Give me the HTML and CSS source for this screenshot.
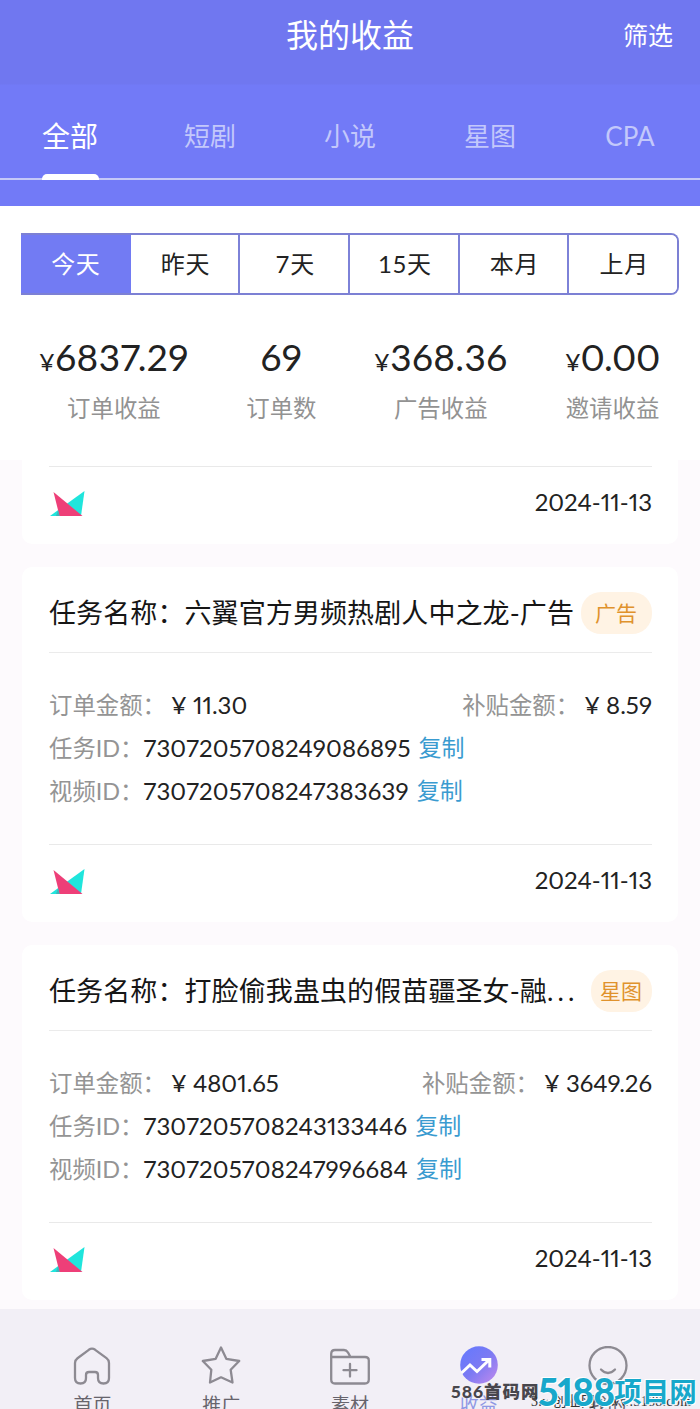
FILE: index.html
```
<!DOCTYPE html>
<html lang="zh-CN">
<head>
    <meta charset="UTF-8">
    <meta name="viewport" content="width=device-width, initial-scale=1.0">
    <title>我的收益</title>
    <link rel="stylesheet" href="styles.css">
</head>
<body>
    <svg class="defs" width="0" height="0">
        <symbol id="logo" viewBox="0 0 36 28">
            <path d="M35.5 0 L32 25 H1 Z" fill="#1fe5dc"/>
            <path d="M4.5 1 L33.5 25 H10.5 Z" fill="#ee3f78"/>
            <path d="M9 19.5 L10.5 25 H7 Z" fill="#3fb4ba"/>
        </symbol>
    </svg>

    <header class="header">
        <div class="title-bar">
            <span></span>
            <h1>我的收益</h1>
            <span class="filter">筛选</span>
        </div>
        <nav class="tabs">
            <span class="tab active">全部</span>
            <span class="tab">短剧</span>
            <span class="tab">小说</span>
            <span class="tab">星图</span>
            <span class="tab">CPA</span>
        </nav>
    </header>

    <section class="summary">
        <div class="dates">
            <button class="active">今天</button>
            <button>昨天</button>
            <button>7天</button>
            <button>15天</button>
            <button>本月</button>
            <button>上月</button>
        </div>
        <div class="stats">
            <div class="stat"><p class="num"><small>¥</small>6837.29</p><p class="label">订单收益</p></div>
            <div class="stat"><p class="num">69</p><p class="label">订单数</p></div>
            <div class="stat"><p class="num"><small>¥</small>368.36</p><p class="label">广告收益</p></div>
            <div class="stat"><p class="num zero"><small>¥</small>0.00</p><p class="label">邀请收益</p></div>
        </div>
    </section>

    <main class="list">
        <article class="card first">
            <div class="card-foot">
                <svg class="logo"><use href="#logo"/></svg>
                <time>2024-11-13</time>
            </div>
        </article>

        <article class="card">
            <div class="card-head">
                <h2>任务名称：六翼官方男频热剧人中之龙-广告</h2>
                <span class="badge wide">广告</span>
            </div>
            <div class="info">
                <div class="row">
                    <p><span class="key">订单金额：</span><span class="money">¥ 11.30</span></p>
                    <p><span class="key">补贴金额：</span><span class="money">¥ 8.59</span></p>
                </div>
                <div class="row"><p><span class="key">任务ID：</span><span class="id">7307205708249086895</span><a>复制</a></p></div>
                <div class="row"><p><span class="key">视频ID：</span><span class="id">7307205708247383639</span><a>复制</a></p></div>
            </div>
            <div class="card-foot">
                <svg class="logo"><use href="#logo"/></svg>
                <time>2024-11-13</time>
            </div>
        </article>

        <article class="card">
            <div class="card-head">
                <h2>任务名称：打脸偷我蛊虫的假苗疆圣女-融<span class="dots">...</span></h2>
                <span class="badge">星图</span>
            </div>
            <div class="info">
                <div class="row">
                    <p><span class="key">订单金额：</span><span class="money">¥ 4801.65</span></p>
                    <p><span class="key">补贴金额：</span><span class="money">¥ 3649.26</span></p>
                </div>
                <div class="row"><p><span class="key">任务ID：</span><span class="id">7307205708243133446</span><a>复制</a></p></div>
                <div class="row"><p><span class="key">视频ID：</span><span class="id">7307205708247996684</span><a>复制</a></p></div>
            </div>
            <div class="card-foot">
                <svg class="logo"><use href="#logo"/></svg>
                <time>2024-11-13</time>
            </div>
        </article>
    </main>

    <footer class="tabbar">
        <div class="item">
            <svg viewBox="0 0 40 40"><path d="M16.8 3.8 Q20 1.6 23.2 3.8 L34.5 12.2 Q37 14 37 17 V32 Q37 37.5 31.5 37.5 Q26 37.5 26 32 V29 Q26 26 23 26 H17 Q14 26 14 29 V32 Q14 37.5 8.5 37.5 Q3 37.5 3 32 V17 Q3 14 5.5 12.2 Z"/></svg>
            <span>首页</span>
        </div>
        <div class="item">
            <svg viewBox="0 0 40 40"><path d="M20 1.5 L25.3 12.8 L38.2 15 L29.7 23.8 L31.5 36.5 L20 31.3 L9 36.5 L10.3 23.8 L1.8 15 L14.7 12.8 Z"/></svg>
            <span>推广</span>
        </div>
        <div class="item">
            <svg viewBox="0 0 40 40"><path d="M1.2 11 V8 Q1.2 4 5 4 H14 Q16.5 4 18 6.5 L20.5 11 M1.2 11 H35 Q38.8 11 38.8 14.5 V33.5 Q38.8 37.5 34.8 37.5 H5 Q1.2 37.5 1.2 33.5 Z M20 18 V30.5 M13.5 24.2 H26.5"/></svg>
            <span>素材</span>
        </div>
        <div class="item on">
            <svg viewBox="0 0 40 40">
                <defs>
                    <linearGradient id="disc" x1="0" y1="0" x2="1" y2="1">
                        <stop offset="0" stop-color="#6379ff"/>
                        <stop offset="0.5" stop-color="#7b7af3"/>
                        <stop offset="1" stop-color="#c38aed"/>
                    </linearGradient>
                </defs>
                <circle class="disc" cx="20" cy="19" r="18.8" fill="url(#disc)"/>
                <path class="trend" d="M2.5 27 L11 19 L18 25.5 L30 14 M22.5 13.5 H30.8 V21.5"/>
            </svg>
            <span>收益</span>
        </div>
        <div class="item">
            <svg viewBox="0 0 40 40"><circle cx="20" cy="19.5" r="18.5"/><path d="M13 23.5 Q20 30.5 27 23.5"/></svg>
            <span>我的</span>
        </div>
        <div class="mark mark-left">586首码网</div>
        <div class="mark mark-small">3.w创业网 www.5188.com</div>
        <div class="mark mark-right"><b>5188</b>项目网</div>
    </footer>
</body>
</html>
```
FILE: styles.css
```
* {
    margin: 0;
    padding: 0;
    box-sizing: border-box;
}

body {
    width: 700px;
    height: 1409px;
    overflow: hidden;
    display: flex;
    flex-direction: column;
    font-family: Lato, "Noto Sans CJK SC", sans-serif;
    font-variant-numeric: proportional-nums;
    background-color: #fdfafd;
    color: #222;
}

.defs {
    position: absolute;
}

/* header */
.header {
    height: 206px;
    flex-shrink: 0;
    background: linear-gradient(#7077f0 0, #7077f0 84px, #727af7 85px);
    color: #fff;
}

.title-bar {
    display: grid;
    grid-template-columns: 1fr auto 1fr;
    align-items: center;
    height: 70px;
    padding: 0 27px 1px;
}

h1 {
    font-size: 32px;
    font-weight: 400;
    line-height: 40px;
}

.filter {
    justify-self: end;
    font-size: 25px;
    line-height: 36px;
}

.tabs {
    display: flex;
    height: 110px;
    border-bottom: 2px solid #c5c9f8;
}

.tab {
    display: flex;
    flex-direction: column;
    align-items: center;
    flex: 1;
    height: 110px;
    padding-top: 46px;
    font-size: 26px;
    line-height: 40px;
    color: #c3c8fb;
}

.tab.active {
    font-size: 28px;
    color: #fff;
}

.tab.active::after {
    content: "";
    width: 57px;
    height: 6px;
    margin-top: 18px;
    border-radius: 5px 5px 0 0;
    background-color: #fff;
}

/* summary */
.summary {
    height: 254px;
    flex-shrink: 0;
    padding-top: 27px;
    background-color: #fff;
}

.dates {
    display: flex;
    width: 658px;
    height: 62px;
    margin-left: 21px;
    border: 2px solid #7c80d4;
    border-left: none;
    border-radius: 0 8px 8px 0;
    overflow: hidden;
}

.dates button {
    flex: 1;
    border: none;
    border-right: 2px solid #7d82d8;
    background-color: #fff;
    font-family: inherit;
    font-size: 24px;
    letter-spacing: 0.7px;
    padding: 0 0 3px 2px;
    color: #222;
}

.dates button:last-child {
    border-right: none;
}

.dates button.active {
    margin: -2px 0;
    background-color: #727bf3;
    border-color: #727bf3;
    color: #fff;
}

.stats {
    display: flex;
    justify-content: space-between;
    padding: 38px 40px 0 39px;
    text-align: center;
}

.num {
    height: 48px;
    font-size: 37px;
    line-height: 48px;
    letter-spacing: 0.4px;
}

.num.zero {
    letter-spacing: -0.4px;
}

.num small {
    font-size: 24px;
    line-height: 24px;
}

.label {
    margin-top: 9px;
    font-size: 23.4px;
    line-height: 36px;
    color: #929292;
}

/* order list */
.list {
    display: flex;
    flex-direction: column;
    gap: 23px;
    height: 849px;
    flex-shrink: 0;
    padding: 0 22px;
    overflow: hidden;
}

.card {
    flex-shrink: 0;
    height: 355px;
    padding: 0 26px 0 27px;
    border-radius: 10px;
    background-color: #fff;
}

.card.first {
    height: 84px;
    padding-top: 6px;
    border-radius: 0 0 10px 10px;
}

.card-head {
    display: flex;
    align-items: center;
    justify-content: space-between;
    height: 86px;
    padding-top: 7px;
    border-bottom: 1px solid #ebebeb;
}

h2 {
    font-size: 27px;
    font-weight: 400;
    line-height: 40px;
    letter-spacing: 0.1px;
    white-space: nowrap;
    color: #161616;
}

.dots {
    letter-spacing: 4.2px;
}

.badge {
    height: 42px;
    padding: 0 10px 0 9px;
    border-radius: 20px;
    background-color: #fff3e4;
    font-size: 21px;
    line-height: 41px;
    white-space: nowrap;
    color: #e0922c;
}

.badge.wide {
    padding: 0 15px 0 14px;
}

.info {
    height: 191px;
    padding-top: 30px;
}

.row {
    display: flex;
    justify-content: space-between;
    height: 43px;
    font-size: 24px;
    line-height: 43px;
}

.row p {
    display: flex;
}

.key {
    font-size: 23.4px;
    line-height: 45px;
    color: #949494;
}

.money {
    margin-left: 5px;
}

.id {
    letter-spacing: 0.15px;
}

.row a {
    margin-left: 8px;
    font-size: 23px;
    color: #3a9bd0;
}

.card-foot {
    display: flex;
    justify-content: space-between;
    align-items: flex-start;
    height: 78px;
    border-top: 1px solid #e9e9e9;
}

.logo {
    width: 36px;
    height: 28px;
    margin-top: 24px;
}

.card-foot time {
    margin-top: 14px;
    font-size: 24px;
    line-height: 42px;
}

/* bottom bar */
.tabbar {
    position: relative;
    display: flex;
    height: 100px;
    flex-shrink: 0;
    padding: 37px 28px 0;
    overflow: hidden;
    background-color: #f2eff6;
}

.item {
    display: flex;
    flex-direction: column;
    align-items: center;
    flex: 1;
    font-size: 19px;
    line-height: 24px;
    color: #67646c;
}

.item svg {
    width: 40px;
    height: 40px;
    flex-shrink: 0;
    margin-bottom: 7px;
    fill: none;
    stroke: #8d8a92;
    stroke-width: 2.3;
    stroke-linecap: round;
    stroke-linejoin: round;
}

.item svg .disc {
    stroke: none;
}

.item svg .trend {
    stroke: #fff;
    stroke-width: 3;
    stroke-linecap: butt;
    stroke-linejoin: miter;
}

.item.on {
    color: #8f98e4;
}

/* site marks lying over the bar */
.mark {
    position: absolute;
    white-space: nowrap;
}

.mark-left {
    left: 451px;
    top: 73px;
    font-size: 17.5px;
    font-weight: 900;
    line-height: 20px;
    letter-spacing: 1px;
    color: #48464c;
}

.mark-small {
    left: 531px;
    bottom: 0;
    font-family: "Liberation Serif", "Noto Sans CJK SC", serif;
    font-size: 14px;
    line-height: 14px;
    letter-spacing: 0.3px;
    color: #333;
}

.mark-right {
    left: 538px;
    top: 67px;
    display: flex;
    align-items: center;
    font-size: 27.5px;
    font-weight: 700;
    line-height: 32px;
    color: #18a8cb;
    text-shadow: 1px 1px 0 #fff, -1px -1px 0 #fff;
}

.mark-right b {
    font-size: 37px;
    font-weight: 900;
    letter-spacing: -0.8px;
}
```
